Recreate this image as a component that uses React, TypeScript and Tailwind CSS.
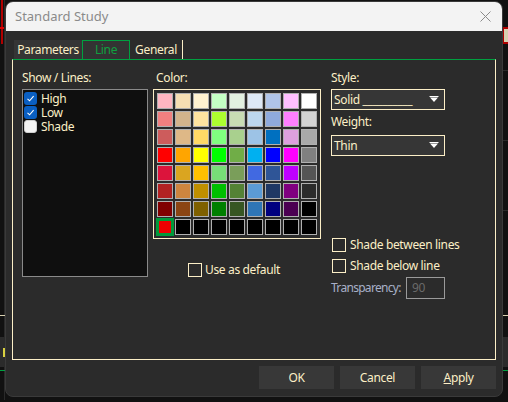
import React from "react";

const cream = "text-[#fcefc7]";

const palette: string[][] = [
  ["#ffb6c1", "#f5deb3", "#fff2d0", "#c4ffc4", "#e2f0e0", "#dde8f5", "#b0c4e8", "#ffc0ff", "#ffffff"],
  ["#f08080", "#d2b48c", "#ffe4a0", "#adff2f", "#c8dcb4", "#bdd7ee", "#8faadc", "#ff80ff", "#d3d3d3"],
  ["#cd5c5c", "#deb887", "#ffd966", "#80ff80", "#a9d08e", "#9dc3e6", "#0070c0", "#dda0dd", "#a9a9a9"],
  ["#ff0000", "#ffa500", "#ffff00", "#00ff00", "#70ad47", "#00b0f0", "#0000ff", "#ff00ff", "#808080"],
  ["#dc143c", "#daa520", "#ffc000", "#77dd77", "#7a9e5a", "#4169e1", "#2f5597", "#bf00ff", "#555555"],
  ["#b22222", "#cd853f", "#bf8f00", "#00c000", "#548235", "#5b9bd5", "#1f3864", "#800080", "#2b2b2b"],
  ["#800000", "#8b4513", "#7f6000", "#008000", "#375623", "#2e75b6", "#000080", "#4b0052", "#000000"],
  ["SEL", "#000000", "#000000", "#000000", "#000000", "#000000", "#000000", "#000000", "#000000"],
];

function BlueCheck({ checked }: { checked: boolean }) {
  if (!checked) {
    return <div className="w-[13px] h-[13px] rounded-[3px] bg-[#f3f3f3] border border-[#cfcfcf] shrink-0" />;
  }
  return (
    <div className="w-[13px] h-[13px] rounded-[3px] bg-[#0a5fc2] flex items-center justify-center shrink-0">
      <svg width="9" height="9" viewBox="0 0 9 9">
        <path d="M1.5 4.8 L3.6 6.8 L7.6 2.2" fill="none" stroke="#ffffff" strokeWidth="1.1" />
      </svg>
    </div>
  );
}

function Box() {
  return <div className="w-[14px] h-[14px] border border-[#fcefc7] shrink-0" />;
}

function Arrow() {
  return (
    <svg width="10" height="7" viewBox="0 0 10 7" className="shrink-0">
      <path d="M0.5 0.5 H9.5" stroke="#ffffff" strokeWidth="1" />
      <path d="M1 1.5 H9 L5 6 Z" fill="#ffffff" />
    </svg>
  );
}

export default function App() {
  return (
    <div
      className="relative w-[508px] h-[402px] bg-[#111111] overflow-hidden tracking-[-0.35px]"
      style={{ fontFamily: '"Noto Sans", "Open Sans", sans-serif' }}
    >
      {/* background chart remnants */}
      <div className="absolute left-[1px] top-0 w-[2px] h-[44px] bg-[#b00000]" />
      <div className="absolute left-0 top-[27px] w-[5px] h-[2px] bg-[#e00000]" />
      <div className="absolute left-[4px] top-[0px] w-[1px] h-[400px] bg-[#2a2a2a]" />
      <div className="absolute left-0 top-[315px] w-[6px] h-[1px] bg-[#d8d0b0]" />
      <div className="absolute left-0 top-[337px] w-[6px] h-[30px] bg-[#2b2b2b] overflow-hidden">
        <div className="w-[5px] h-[9px] mt-[11px] border-r-2 border-[#d8d040]" />
      </div>
      <div className="absolute left-0 top-[370px] w-[6px] h-[1px] bg-[#00a040]" />
      <div className="absolute left-[502px] top-[27px] w-[6px] h-[17px] bg-[#b00000]" />
      <div className="absolute left-[504px] top-[29px] w-[4px] h-[13px] bg-[#d8d0b0]" />
      <div className="absolute left-[502px] top-[315px] w-[6px] h-[1px] bg-[#d8d0b0]" />
      <div className="absolute left-[502px] top-[337px] w-[6px] h-[30px] bg-[#2b2b2b]" />
      <div className="absolute left-[502px] top-[370px] w-[6px] h-[1px] bg-[#00a040]" />
      <div className="absolute left-[502px] top-[70px] w-[6px] h-[1px] bg-[#2a2a2a]" />
      <div className="absolute left-[502px] top-[140px] w-[6px] h-[1px] bg-[#2a2a2a]" />
      <div className="absolute left-[502px] top-[210px] w-[6px] h-[1px] bg-[#2a2a2a]" />

      {/* dialog window */}
      <div className="absolute left-[5px] top-[1px] w-[498px] h-[396px] rounded-[8px] border border-[#3a3a3a] bg-[#2b2b2b] overflow-hidden flex flex-col">
        {/* title bar */}
        <div className="h-[29px] bg-[#f3f3f3] flex items-center justify-between pl-[9px] pr-[11px] shrink-0">
          <span className="text-[13px] text-[#8a8a8a] tracking-normal">Standard Study</span>
          <svg width="11" height="11" viewBox="0 0 11 11">
            <path d="M0.5 0.5 L10.5 10.5 M10.5 0.5 L0.5 10.5" stroke="#8a8a8a" strokeWidth="1" />
          </svg>
        </div>

        {/* body */}
        <div className="flex-1 flex flex-col px-[6px] pt-[9px]">
          {/* tabs */}
          <div className="flex h-[19px] pl-[2px] text-[12px]">
            <div className={`w-[68px] h-[19px] bg-[#353535] flex items-center justify-center ${cream}`}>Parameters</div>
            <div className="w-[48px] h-[19px] bg-[#333333] border-t border-l border-r border-[#00a040] flex items-center justify-center text-[#10a040]">
              Line
            </div>
            <div className={`w-[53px] h-[19px] border-r border-[#fcefc7] flex items-center justify-center ${cream}`}>General</div>
          </div>

          {/* panel */}
          <div className="h-[301px] border-x border-b border-[#fcefc7] border-t border-t-[#00a040] flex pl-[9px] pt-[10px] text-[12px]">
            {/* column 1 */}
            <div className="w-[126px] flex flex-col">
              <div className={`h-[16px] leading-[16px] ${cream}`}>Show / Lines:</div>
              <div className="mt-[3px] h-[188px] bg-[#0f0f0f] border border-[#8a8a8a] pl-[1px] pt-[1px]">
                {[
                  ["High", true],
                  ["Low", true],
                  ["Shade", false],
                ].map(([label, checked]) => (
                  <div key={label as string} className="h-[14px] flex items-center gap-[4px]">
                    <BlueCheck checked={checked as boolean} />
                    <span className={`${cream} leading-[13px]`}>{label as string}</span>
                  </div>
                ))}
              </div>
            </div>

            {/* column 2 */}
            <div className="w-[168px] ml-[5px] flex flex-col">
              <div className={`h-[16px] leading-[16px] pl-[3px] ${cream}`}>Color:</div>
              <div className="mt-[3px] h-[150px] border border-[#fcefc7] p-[3px] grid grid-cols-9 gap-[2px]">
                {palette.flat().map((c, i) =>
                  c === "SEL" ? (
                    <div key={i} className="w-[18px] h-[18px] -m-[1px] border-[3px] border-[#009a3a] bg-[#ee0000]" />
                  ) : (
                    <div key={i} className="w-[16px] h-[16px] border border-[#b0b0b0]" style={{ backgroundColor: c }} />
                  )
                )}
              </div>
              <div className="mt-[24px] ml-[35px] flex items-center gap-[3px] h-[14px]">
                <Box />
                <span className={`${cream}`}>Use as default</span>
              </div>
            </div>

            {/* column 3 */}
            <div className="w-[114px] ml-[10px] flex flex-col">
              <div className={`h-[16px] leading-[16px] ${cream}`}>Style:</div>
              <div className="mt-[3px] h-[21px] border border-[#fcefc7] bg-[#363636] flex items-center justify-between pl-[2px] pr-[5px]">
                <span className={`${cream} whitespace-nowrap`}>Solid __________</span>
                <Arrow />
              </div>
              <div className={`mt-[4px] h-[16px] leading-[16px] ${cream}`}>Weight:</div>
              <div className="mt-[5px] h-[21px] border border-[#fcefc7] bg-[#363636] flex items-center justify-between pl-[2px] pr-[5px]">
                <span className={`${cream}`}>Thin</span>
                <Arrow />
              </div>
              <div className="mt-[82px] ml-[1px] flex items-center gap-[4px] h-[14px] whitespace-nowrap">
                <Box />
                <span className={`${cream}`}>Shade between lines</span>
              </div>
              <div className="mt-[7px] ml-[1px] flex items-center gap-[4px] h-[14px] whitespace-nowrap">
                <Box />
                <span className={`${cream}`}>Shade below line</span>
              </div>
              <div className="mt-[4px] flex items-center justify-between h-[22px]">
                <span className="text-[#a8b0c8] tracking-[-0.7px] whitespace-nowrap">Transparency:</span>
                <div className="w-[39px] h-[22px] shrink-0 border border-[#9a9a9a] flex items-center pl-[5px] text-[#6a6a6a]">90</div>
              </div>
            </div>
          </div>

          {/* buttons */}
          <div className="mt-[6px] flex justify-end gap-[6px] text-[12px]">
            {["OK", "Cancel", "Apply"].map((b) => (
              <div key={b} className={`w-[75px] h-[23px] bg-[#383838] flex items-center justify-center ${cream}`}>
                {b === "Apply" ? (
                  <span>
                    <span className="underline">A</span>pply
                  </span>
                ) : (
                  b
                )}
              </div>
            ))}
          </div>
        </div>
      </div>
    </div>
  );
}
